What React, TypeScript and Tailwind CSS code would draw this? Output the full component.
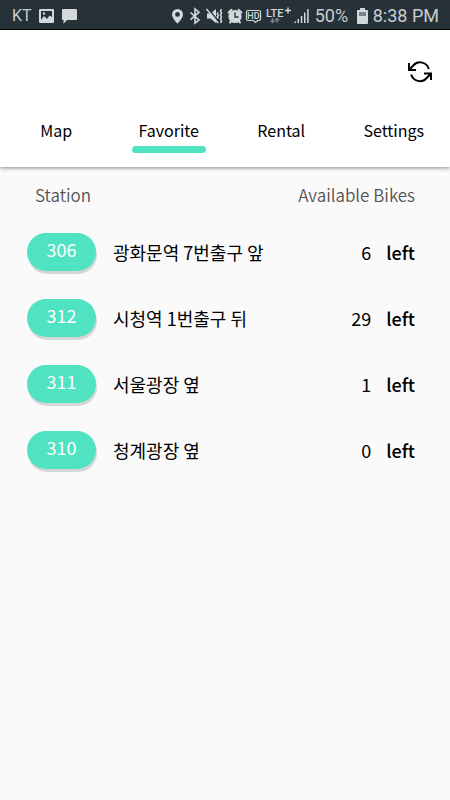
import React from "react";

const stations = [
  { id: 306, name: "광화문역 7번출구 앞", bikes: 6 },
  { id: 312, name: "시청역 1번출구 뒤", bikes: 29 },
  { id: 311, name: "서울광장 옆", bikes: 1 },
  { id: 310, name: "청계광장 옆", bikes: 0 },
];

const tabs = ["Map", "Favorite", "Rental", "Settings"];

function LeftIcons() {
  return (
    <svg width="38" height="16" viewBox="0 0 38 16" fill="none" aria-hidden="true">
      <path fillRule="evenodd" fill="#d3d8da" d="M1 1h13a1 1 0 0 1 1 1v12a1 1 0 0 1-1 1H1a1 1 0 0 1-1-1V2a1 1 0 0 1 1-1zM2 3v9l3-4 3 3 2.500-3.500L13 9V3zM5 4.300a1.200 1.200 0 1 1 0 2.400 1.200 1.200 0 0 1 0-2.400z" />
      <path fill="#d3d8da" d="M24 1h13a1 1 0 0 1 1 1v9a1 1 0 0 1-1 1H28l-3.500 3.800V12H24a1 1 0 0 1-1-1V2a1 1 0 0 1 1-1z" />
    </svg>
  );
}

function RightIcons() {
  return (
    <svg width="140" height="20" viewBox="171 5 140 20" fill="none" aria-hidden="true">
      <path fill="#d3d8da" fillRule="evenodd" d="M177.500 8a5.500 5.500 0 0 1 5.500 5.500c0 3.800-5.500 9.200-5.500 9.200s-5.500-5.400-5.500-9.200a5.500 5.500 0 0 1 5.500-5.500zm0 3a2.400 2.400 0 1 0 0 4.800 2.400 2.400 0 0 0 0-4.800z" />
      <path stroke="#d3d8da" strokeWidth="1.600" d="M190.500 11.500l8.500 7.500-4 3.200V8l4 3.200-8.500 7.500" />
      <path fill="#d3d8da" d="M207 12.500h3.500l5.500-4.500v14l-5.500-4.500H207z" />
      <path stroke="#263238" strokeWidth="1.500" d="M208.500 8l10 12.500" />
      <path stroke="#d3d8da" strokeWidth="1.500" d="M206.500 8l11.500 14" />
      <path stroke="#d3d8da" strokeWidth="1.600" d="M218.300 11.500l-1 1.500 1 1.500-1 1.500 1 1.500M221.500 8l-1 2 1 2-1 2 1 2-1 2 1 2-1 2" />
      <circle cx="235" cy="15.500" r="6.600" fill="#d3d8da" />
      <path stroke="#d3d8da" strokeWidth="2" strokeLinecap="round" d="M228.500 11.500l3-2.700M241.500 11.500l-3-2.700M231 20.500l-1 1M239 20.500l1 1" />
      <path stroke="#263238" strokeWidth="1.400" d="M235 11.500v4.500h3.500" />
      <path stroke="#d3d8da" strokeWidth="1.200" d="M248 9.500h11a1.500 1.500 0 0 1 1.500 1.500v7a1.500 1.500 0 0 1-1.500 1.500h-1.500l-2 2-2-2H248a1.500 1.500 0 0 1-1.500-1.500v-7a1.500 1.500 0 0 1 1.500-1.500z" />
      <text x="253.500" y="18" textAnchor="middle" fill="#d3d8da" fontSize="9" fontWeight="500" fontFamily="Roboto, sans-serif">HD</text>
      <text x="266" y="16" fill="#d3d8da" fontSize="11" fontWeight="500" fontFamily="Roboto, sans-serif">LTE</text>
      <path stroke="#d3d8da" strokeWidth="1.400" d="M288 6.500v6M285 9.500h6" />
      <path stroke="#78858b" strokeWidth="1.300" d="M272.500 17v4.500M270.500 19.500l2 2 2-2M277 22v-4.500M275 19.500l2-2 2 2" />
      <path fill="#d3d8da" d="M294.500 20.500h1.500v1.500h-1.500zM297.500 18h1.500v4h-1.500zM300.800 15h1.500v7h-1.500zM304 11.500h1.500v10.500H304zM307.200 8h1.500v14h-1.500z" />
    </svg>
  );
}

function Battery() {
  return (
    <svg width="11" height="16" viewBox="0 0 11 16" aria-hidden="true">
      <path fill="#d3d8da" d="M3 0h5v2h2a1 1 0 0 1 1 1v12a1 1 0 0 1-1 1H1a1 1 0 0 1-1-1V3a1 1 0 0 1 1-1h2z" />
      <path fill="#78858b" d="M2 4h7v4H2z" />
    </svg>
  );
}

function StatusBar() {
  return (
    <div className="flex h-[30px] items-center border-b border-black bg-[#263238] pl-3 pr-[11px] pt-[2px] font-['Roboto',sans-serif] text-[18px] font-normal leading-6 text-[#c8cdd0]">
      <span className="w-[27px] text-[16px]">KT</span>
      <LeftIcons />
      <div className="ml-auto flex items-center">
        <RightIcons />
        <span className="ml-1 w-[42px]">50%</span>
        <Battery />
        <span className="ml-[5px]">8:38 PM</span>
      </div>
    </div>
  );
}

export default function App() {
  return (
    <div className="min-h-screen bg-[#fafafa] font-['Noto_Sans_CJK_KR','Noto_Sans',sans-serif] text-black">
      <StatusBar />
      <header className="bg-white shadow-[0_1px_4px_rgba(0,0,0,0.45)]">
        <div className="flex justify-end pr-[17px] pt-[29px]">
          <button type="button" aria-label="Refresh">
            <svg width="26" height="26" viewBox="0 0 26 26" fill="none" stroke="#000" strokeWidth="2" aria-hidden="true">
              <path d="M2 4v7h7M2.500 10.500l4-4.200A9 9 0 0 1 21.800 10M24 21v-6.500h-7M23.500 15l-4 4.200A9 9 0 0 1 4.200 15.500" />
            </svg>
          </button>
        </div>
        <nav className="grid grid-cols-4 pb-[14px] pt-[33px]">
          {tabs.map((tab) => (
            <a key={tab} href="#" aria-current={tab === "Favorite" ? "page" : undefined} className="flex flex-col items-center gap-1 text-[16px] font-normal leading-6">
              {tab}
              <span className={tab === "Favorite" ? "h-[7px] w-[74px] rounded-full bg-[#50e3c2]" : "h-[7px] w-[74px]"} />
            </a>
          ))}
        </nav>
      </header>
      <main className="pt-4">
        <div className="flex justify-between px-[35px] text-[17px] font-[350] leading-6 text-[#555]">
          <span>Station</span>
          <span>Available Bikes</span>
        </div>
        <ul className="pt-3">
          {stations.map((s) => (
            <li key={s.id} className="flex h-[66px] items-center pl-[27px] pr-[35px] text-[18px] leading-6">
              <button type="button" className="mr-[17px] flex h-[38px] w-[69px] items-center justify-center rounded-full bg-[#50e3c2] pb-1.5 text-white shadow-[1px_3px_0_#d6d6d6]">
                {s.id}
              </button>
              <span className="flex-1">{s.name}</span>
              <span>{s.bikes}</span>
              <span className="ml-[15px] font-medium">left</span>
            </li>
          ))}
        </ul>
      </main>
    </div>
  );
}
